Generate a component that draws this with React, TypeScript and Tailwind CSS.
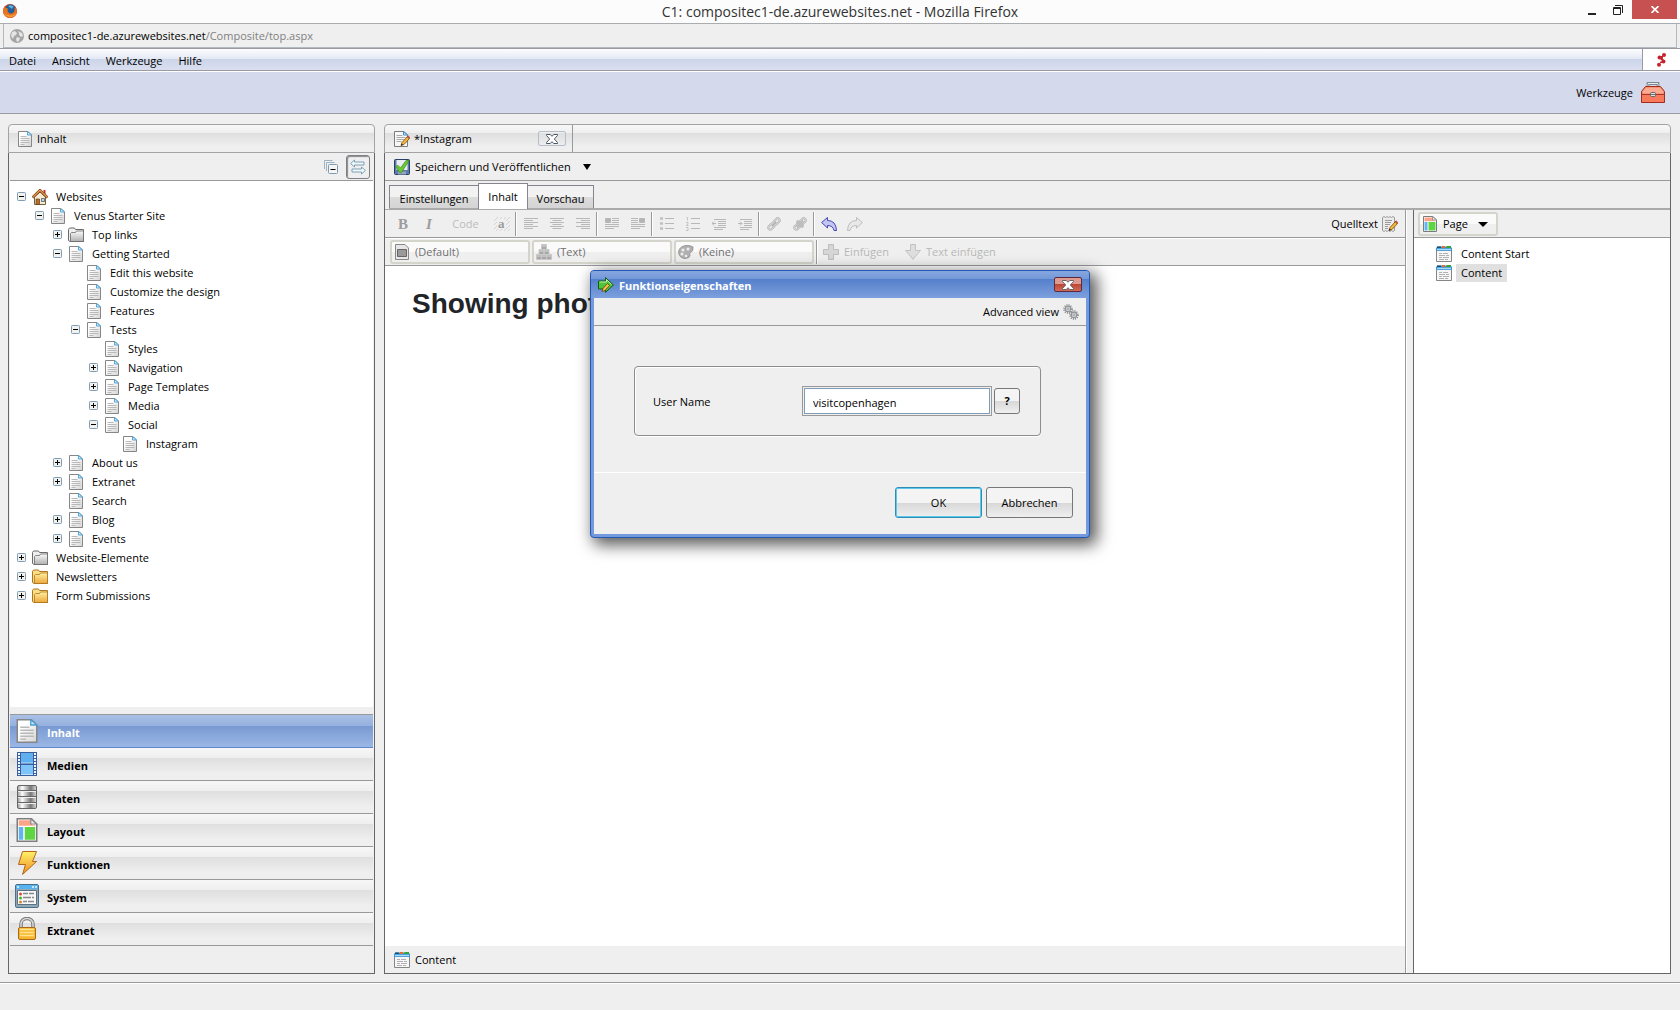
import type { ReactNode } from "react";

const bar =
  "bg-[linear-gradient(to_bottom,#f7f7f7_0%,#efefef_30%,#dfdfdf_31%,#efefef_80%)]";

function PageIcon({ size = 16 }: { size?: number }) {
  return (
    <svg width={size} height={size} viewBox="0 0 16 16" className="shrink-0">
      <defs>
        <linearGradient id="pg" x1="0" y1="0" x2="1" y2="1">
          <stop offset="0.3" stopColor="#fff" />
          <stop offset="1" stopColor="#d4d4d4" />
        </linearGradient>
      </defs>
      <path d="M1.500 .5h9.500l3.500 3.500v11.500h-13z" fill="url(#pg)" stroke="#868686" />
      <path d="M3.500 5.500h6M3.500 7.500h9M3.500 9.500h9M3.500 11.500h9M3.500 13.500h4" stroke="#b9b9b9" />
      <path d="M10.500 .5v3.500h4z" fill="#cdeafa" stroke="#4a9fd0" strokeWidth="0.9" />
    </svg>
  );
}

function Pencil() {
  return (
    <>
      <path d="M7 14.500l1-3 5.500-6 2 2-5.500 6z" fill="#f3b73c" stroke="#7a4a10" strokeWidth="0.8" />
      <path d="M13.200 5.800l1-1 1.600 1.600-1 1.200z" fill="#d9483b" stroke="#8c2a22" strokeWidth="0.5" />
      <path d="M6.800 14.700l.9-2.200 1.300 1.300z" fill="#222" />
    </>
  );
}

function EditPageIcon() {
  return (
    <svg width="16" height="16" viewBox="0 0 16 16" className="shrink-0">
      <path d="M.5 .5h9.500l3.500 3.500v11.500h-13z" fill="#f7f7f7" stroke="#7c7c7c" />
      <path d="M2.500 4.500h6M2.500 6.500h9M2.500 8.500h8M2.500 10.500h5" stroke="#a9a9a9" />
      <path d="M9.500 .5v3.500h4z" fill="#bfe4f8" stroke="#3d8fc4" />
      <Pencil />
    </svg>
  );
}

function SourceIcon() {
  return (
    <svg width="16" height="16" viewBox="0 0 16 16">
      <path
        d="M.5 1.500l1.500-1 1.500 1 1.500-1 1.500 1 1.500-1 1.500 1 1.500-1 1.500 1v13l-1.500 1-1.500-1-1.500 1-1.500-1-1.500 1-1.500-1-1.500 1-1.500-1z"
        fill="#ececec"
        stroke="#999"
      />
      <path d="M3 4.500h7M3 6.500h6M3 8.500h5M3 10.500h3M3 12.500h3" stroke="#9a9a9a" />
      <Pencil />
    </svg>
  );
}

function FolderIcon({ gold = false }: { gold?: boolean }) {
  const line = gold ? "#b07420" : "#6a6a6a";
  return (
    <svg width="16" height="16" viewBox="0 0 16 16" className="shrink-0">
      <defs>
        <linearGradient id={gold ? "fg" : "fs"} x1="0" y1="0" x2="0" y2="1">
          <stop offset="0" stopColor={gold ? "#fdf0a0" : "#fafafa"} />
          <stop offset="1" stopColor={gold ? "#eda83c" : "#b0b0b0"} />
        </linearGradient>
      </defs>
      <path d="M.5 13.500v-11l1-1.500h5l1 1.500h8v12h-13.500z" fill={gold ? "#f9df86" : "#efefef"} stroke={line} />
      <path d="M2.500 14.500v-8l1-1h4l1-1.500h7v10.500z" fill={gold ? "url(#fg)" : "url(#fs)"} stroke={line} strokeWidth="0.8" />
    </svg>
  );
}

function HomeIcon() {
  return (
    <svg width="16" height="16" viewBox="0 0 16 16" className="shrink-0">
      <path d="M11.500 1h2v4h-2z" fill="#c8372d" />
      <path d="M2.500 8L8 3l5.500 5v7.500h-11z" fill="#f4ead6" stroke="#77603f" />
      <path d="M.5 8.500L8 1.200l7.500 7.300" fill="none" stroke="#7b3d17" strokeWidth="2.600" />
      <path d="M.8 8.200L8 1.200l7.200 7" fill="none" stroke="#e59a52" strokeWidth="1.200" />
      <path d="M4 10h3.500v5.500H4z" fill="#b5702e" stroke="#6b3d12" strokeWidth="0.7" />
      <path d="M9.500 9.500h3v3h-3z" fill="#bcdcf2" stroke="#555" strokeWidth="0.8" />
    </svg>
  );
}

function ContentIcon() {
  return (
    <svg width="16" height="16" viewBox="0 0 16 16" className="shrink-0">
      <path d="M.5 3.500h15v12H.5z" fill="#f6f6f6" stroke="#868686" />
      <path d="M0 2l1.500-1.500h13L16 2v3H0z" fill="#3e94d2" />
      <path d="M1 .5h4v1.500H1z" fill="#1f4a6b" />
      <path d="M6 0h3v2H6z" fill="#e66a2c" />
      <path d="M10.500 0h4.500v2h-4.500z" fill="#35a53a" />
      <path d="M1 3.500h14" stroke="#a9dafa" strokeWidth="1.400" />
      <path d="M3 7.500h3m1 0h5M3 9.500h6m1 0h3M3 11.500h3m1 0h6M3 13.500h5m1 0h3" stroke="#b0b0b0" />
    </svg>
  );
}

function LayoutIcon({ size = 16 }: { size?: number }) {
  return (
    <svg width={size} height={size} viewBox="0 0 16 16" className="shrink-0">
      <path d="M1.500 .5h9.500l3.500 3.500v11.500h-13z" fill="#fff" stroke="#7c7c7c" />
      <path d="M2.500 1.500h8l1 3h2v.7h-11z" fill="#fba48a" />
      <path d="M2.500 6h3v8.500h-3z" fill="#62b3ee" />
      <path d="M6.500 6h7v8.500h-7z" fill="#5fd544" />
      <path d="M10.500 .5v3.500h4z" fill="#eee" stroke="#888" strokeWidth="0.8" />
    </svg>
  );
}

function FilmIcon() {
  return (
    <svg width="24" height="24" viewBox="0 0 24 24">
      <path d="M2 0h20v24H2z" fill="#3a5f9e" />
      <path d="M6 1h12v10H6z" fill="#5fb0ef" />
      <path d="M6 13h12v9H6z" fill="#7cc4fa" />
      <path d="M6 11h12M6 22.500h12" stroke="#b9e0fc" />
      <path d="M4 1v22M20 1v22" stroke="#f2f6fc" strokeWidth="2" strokeDasharray="2 1" />
    </svg>
  );
}

function DataIcon() {
  return (
    <svg width="24" height="24" viewBox="0 0 24 24">
      <defs>
        <linearGradient id="db" x1="0" y1="0" x2="1" y2="0">
          <stop offset="0" stopColor="#999" />
          <stop offset="0.25" stopColor="#fff" />
          <stop offset="0.7" stopColor="#777" />
          <stop offset="1" stopColor="#ddd" />
        </linearGradient>
      </defs>
      <rect x="2.500" y=".5" width="19" height="23" rx="1.500" fill="url(#db)" stroke="#666" />
      <path d="M3 5.500h18M3 11.500h18M3 17.500h18" stroke="#666" />
      <path d="M3 6.500h18M3 12.500h18M3 18.500h18" stroke="#eee" />
    </svg>
  );
}

function BoltIcon() {
  return (
    <svg width="24" height="24" viewBox="0 0 24 24">
      <defs>
        <linearGradient id="bo" x1="0" y1="0" x2="0" y2="1">
          <stop offset="0" stopColor="#fff36b" />
          <stop offset="1" stopColor="#f08a1d" />
        </linearGradient>
      </defs>
      <path d="M7.500 .5h14l-4 10h4l-14 13 3-10H3.500z" fill="url(#bo)" stroke="#b5661c" />
    </svg>
  );
}

function SystemIcon() {
  return (
    <svg width="24" height="24" viewBox="0 0 24 24">
      <rect x=".5" y=".5" width="23" height="23" rx="1.500" fill="#90a9b8" stroke="#4c6f87" />
      <path d="M1 1h22v4H1z" fill="#55b4ef" />
      <path d="M17 2h2v2h-2zM20 2h2v2h-2zM2 2h2v2H2z" fill="#c2e6fb" />
      <path d="M2.500 6.500h19v14h-19z" fill="#f8f8f8" stroke="#5d7382" />
      <circle cx="5.500" cy="10" r="1.500" fill="#d84a3a" />
      <circle cx="5.500" cy="14" r="1.500" fill="#48b33c" />
      <circle cx="5.500" cy="18" r="1.500" fill="#d8892c" />
      <path d="M8 9.500h5m1 0h5M8 13.500h8m1 0h2M8 17.500h4m1 0h6" stroke="#888" strokeWidth="1.400" />
    </svg>
  );
}

function LockIcon() {
  return (
    <svg width="24" height="24" viewBox="0 0 24 24">
      <path d="M6 12V7a6 5.500 0 0 1 12 0v5" fill="none" stroke="#777" strokeWidth="3.500" />
      <path d="M6 12V7a6 5.500 0 0 1 12 0v5" fill="none" stroke="#d9d9d9" strokeWidth="1.500" />
      <rect x="3.500" y="10.500" width="17" height="12" rx="1.500" fill="#f7b530" stroke="#a8681a" />
      <path d="M5 12.500h14M5 15.500h14M5 18.500h14" stroke="#fde58e" strokeWidth="1.400" />
    </svg>
  );
}

function FirefoxIcon() {
  return (
    <svg width="14" height="14" viewBox="0 0 14 14">
      <circle cx="7" cy="7" r="7" fill="#c9401c" />
      <circle cx="7.500" cy="5.500" r="5" fill="#1f5f9c" />
      <path d="M5 2q3-2 6 1-2 0-2 2z" fill="#5db4dd" />
      <path d="M0 7q0-3 2-5 0 2 3 2.500-1 1.500 0 3.500 3 3 6 0 1-2 .500-4.500Q14 5 14 7.500 13 14 7 14 1 13.500 0 7z" fill="#e8701f" />
      <path d="M1 9q2 4 7 4 4-.500 5-4-3 3-6 2.500Q3 11 1 9z" fill="#f3a23c" />
    </svg>
  );
}

function GlobeIcon() {
  return (
    <svg width="14" height="14" viewBox="0 0 14 14">
      <circle cx="7" cy="7" r="7" fill="#a5a5a5" />
      <path d="M2 3l3-1 2 2-1 2-2 1-1 3-2-3zM8 2l4 2 1 3-2 1-2-2 0-2zM7 8l3 1-1 3-2 1-1-3z" fill="#e4e4e4" />
    </svg>
  );
}

function ToolboxIcon() {
  return (
    <svg width="24" height="21" viewBox="0 0 24 21">
      <path d="M7 5V1.500h10V5" fill="none" stroke="#5e6d6d" strokeWidth="2.500" />
      <path d="M7 5V1.500h10V5" fill="none" stroke="#e6eeee" />
      <path d="M.5 9.500l4-5h15l4 5v11H.5z" fill="#f9795c" stroke="#a02d1d" />
      <path d="M1.500 9.500l3.500-4h14l3.500 4v2h-21z" fill="#fbab92" />
      <path d="M1 12.500h22" stroke="#a93725" />
      <rect x="9.500" y="10.500" width="5" height="4" rx="1" fill="#ddd" stroke="#666" />
      <path d="M10 12.500h4" stroke="#777" />
    </svg>
  );
}

function SaveIcon() {
  return (
    <svg width="16" height="16" viewBox="0 0 16 16">
      <rect x=".5" y=".5" width="15" height="15" rx="1" fill="#5d7ba8" stroke="#2a3f66" />
      <path d="M2.500 1h11v10h-11z" fill="#e9edf3" />
      <path d="M4 12.500h8v3H4z" fill="#97a6bf" />
      <path d="M2 7.500l1.500-1.500L6.500 9 12 1.500h3L7.500 13.500h-2z" fill="#6cc832" stroke="#3a8f20" strokeWidth="0.7" />
    </svg>
  );
}

function FunctionIcon() {
  return (
    <svg width="16" height="16" viewBox="0 0 16 16">
      <path d="M.5 4h7V.6L15.400 8l-7.900 7.400V12h-7z" fill="#4fc43a" stroke="#115c10" />
      <path d="M1.500 5h7V2.500l5 5" fill="none" stroke="#b9f1a4" />
      <path d="M4 14.500l1-3 4.500-5 2 2-4.500 5z" fill="#f6c04a" stroke="#6d3d0e" strokeWidth="0.8" />
    </svg>
  );
}

function GearsIcon() {
  return (
    <svg width="16" height="16" viewBox="0 0 16 16" fill="none">
      <circle cx="5" cy="5" r="4" stroke="#777" strokeWidth="1.500" strokeDasharray="1 1.100" />
      <circle cx="5" cy="5" r="2.800" fill="#d3d7db" stroke="#858a90" />
      <circle cx="5" cy="5" r="1" fill="#f0f0f0" stroke="#666" strokeWidth="0.5" />
      <circle cx="11" cy="11" r="4" stroke="#777" strokeWidth="1.500" strokeDasharray="1 1.100" />
      <circle cx="11" cy="11" r="2.800" fill="#d3d7db" stroke="#858a90" />
      <circle cx="11" cy="11" r="1" fill="#f0f0f0" stroke="#666" strokeWidth="0.5" />
    </svg>
  );
}

function CloseGlyph({ line }: { line: string }) {
  return (
    <svg width="12" height="10" viewBox="0 0 12 10">
      <path
        d="M.5 .5h3.800L6 2.300 7.700 .5h3.800v1L8.300 5l3.200 3.500v1H7.700L6 7.700 4.300 9.500H.5v-1L3.700 5 .5 1.500z"
        fill="#fff"
        stroke={line}
      />
    </svg>
  );
}

function Lines({ d, children }: { d: string; children?: ReactNode }) {
  return (
    <svg width="14" height="14" viewBox="0 0 14 14" stroke="#b8b8b8" fill="none">
      <path d={d} />
      {children}
    </svg>
  );
}

const align = {
  left: "M0 1.500h14M0 3.500h9M0 5.500h14M0 7.500h9M0 9.500h14M0 11.500h9",
  center: "M0 1.500h14M2.500 3.500h9M0 5.500h14M2.500 7.500h9M0 9.500h14M2.500 11.500h9",
  right: "M0 1.500h14M5 3.500h9M0 5.500h14M5 7.500h9M0 9.500h14M5 11.500h9",
};

const chain = (
  <g transform="rotate(-45 8 8)" fill="none">
    <rect x="-1" y="5.500" width="9" height="5" rx="2.500" stroke="#b5b5b5" strokeWidth="2.600" />
    <rect x="8" y="5.500" width="9" height="5" rx="2.500" stroke="#b5b5b5" strokeWidth="2.600" />
    <rect x="-1" y="5.500" width="9" height="5" rx="2.500" stroke="#e0e0e0" />
    <rect x="8" y="5.500" width="9" height="5" rx="2.500" stroke="#e0e0e0" />
    <path d="M4 8h8" stroke="#b0b0b0" strokeWidth="2" />
  </g>
);

function Tool({ label, children }: { label: string; children: ReactNode }) {
  return (
    <button aria-label={label} className="flex h-6 w-[26px] items-center justify-center text-[#9d9d9d]">
      {children}
    </button>
  );
}

function Sep() {
  return <span className="mr-px h-6 w-[2px] border-l border-r border-l-[#999] border-r-white" />;
}

function EditorTools() {
  return (
    <div className="flex h-7 items-center border-b border-[#999] pl-[5px]">
      <Tool label="Fett">
        <span className="font-['Liberation_Serif',serif] text-[15px] font-bold">B</span>
      </Tool>
      <Tool label="Kursiv">
        <span className="font-['Liberation_Serif',serif] text-[15px] font-bold italic">I</span>
      </Tool>
      <button className="h-6 w-[47px] text-[#bcbcbc]">Code</button>
      <Tool label="Zeichen">
        <svg width="16" height="14" viewBox="0 0 16 14">
          <path d="M0 4l4-4M0 8l8-8M0 12l12-12M2 14l14-14M6 14l10-10M10 14l6-6M14 14l2-2" stroke="#d4d4d4" />
          <path d="M3 2h9v10H3z" fill="#efefef" />
          <text x="4" y="11" fontSize="13" fontWeight="bold" fontFamily="Liberation Serif" fill="#9a9a9a">
            a
          </text>
        </svg>
      </Tool>
      <Sep />
      <Tool label="Linksbündig"><Lines d={align.left} /></Tool>
      <Tool label="Zentriert"><Lines d={align.center} /></Tool>
      <Tool label="Rechtsbündig"><Lines d={align.right} /></Tool>
      <Sep />
      <Tool label="Bild links">
        <Lines d="M7 1.500h7M7 3.500h7M7 5.500h7M0 7.500h14M0 9.500h14M0 11.500h9">
          <path d="M.5 1.500h5v4h-5z" fill="#b4b4b4" />
        </Lines>
      </Tool>
      <Tool label="Bild rechts">
        <Lines d="M0 1.500h7M0 3.500h7M0 5.500h7M0 7.500h14M0 9.500h14M0 11.500h9">
          <path d="M8.500 1.500h5v4h-5z" fill="#b4b4b4" />
        </Lines>
      </Tool>
      <Sep />
      <Tool label="Aufzählung">
        <Lines d="M5 1.500h9M5 6.500h9M5 11.500h9">
          <path d="M0 1.500h3M0 6.500h3M0 11.500h3" strokeWidth="2.600" stroke="#c0c0c0" />
        </Lines>
      </Tool>
      <Tool label="Nummerierung">
        <Lines d="M5 1.500h9M5 6.500h9M5 11.500h9">
          <path d="M.5 .5h1v3M0 5.500h2v1l-1.500 2h2M0 10.500h2v3h-2" strokeWidth="0.8" />
        </Lines>
      </Tool>
      <Tool label="Einzug verkleinern">
        <Lines d="M2 2.500h12M6 4.500h8M6 6.500h8M6 8.500h8M2 10.500h12M2 12.500h9">
          <path d="M0 6.500h4M2 4.500l-2 2 2 2" />
        </Lines>
      </Tool>
      <Tool label="Einzug vergrößern">
        <Lines d="M2 2.500h12M6 4.500h8M6 6.500h8M6 8.500h8M2 10.500h12M2 12.500h9">
          <path d="M0 6.500h4M2 4.500l2 2-2 2" />
        </Lines>
      </Tool>
      <Sep />
      <Tool label="Link"><svg width="16" height="16" viewBox="-2 -2 20 20">{chain}</svg></Tool>
      <Tool label="Link entfernen">
        <svg width="16" height="16" viewBox="-2 -2 20 20">
          {chain}
          <path d="M4 4l8 8M12 4l-8 8" stroke="#bdbdbd" strokeWidth="4" />
        </svg>
      </Tool>
      <Sep />
      <Tool label="Rückgängig">
        <svg width="16" height="16" viewBox="0 0 16 16">
          <path d="M.6 6.500L6.500 1.500v3q8.500 0 9 10h-2.500q-1-5-6.500-5v2.500z" fill="#c3c6f4" stroke="#4547b0" />
        </svg>
      </Tool>
      <Tool label="Wiederholen">
        <svg width="16" height="16" viewBox="0 0 16 16">
          <path d="M15.400 6.500L9.500 1.500v3q-8.500 0-9 10h2.500q1-5 6.500-5v2.500z" fill="#e8e8e8" stroke="#bdbdbd" />
        </svg>
      </Tool>
      <button className="ml-auto flex items-center gap-1 pr-[7px]">
        Quelltext <SourceIcon />
      </button>
    </div>
  );
}

function Drop({ label, value, icon }: { label: string; value: string; icon: ReactNode }) {
  return (
    <div className="relative">
      <select
        aria-label={label}
        className="h-6 w-[140px] appearance-none rounded-[3px] border-2 border-[#d4d4cc] bg-[linear-gradient(to_bottom,#fafafa_50%,#efefef_50%)] pl-[23px] text-[#707070]"
      >
        <option>{value}</option>
      </select>
      <span className="pointer-events-none absolute top-1 left-1">{icon}</span>
    </div>
  );
}

function FormatTools() {
  return (
    <div className="flex h-7 items-center gap-[2px] border-t border-b border-t-white border-b-[#999] pl-[5px]">
      <Drop
        label="Klasse"
        value="(Default)"
        icon={
          <svg width="16" height="16" viewBox="0 0 16 16">
            <path d="M1.500 .5h9.500l3.500 3.500v11.500h-13z" fill="#e6e6e6" stroke="#888" />
            <path d="M3.500 5.500h9v7h-9z" fill="#9a9a9a" stroke="#666" />
          </svg>
        }
      />
      <Drop
        label="Format"
        value="(Text)"
        icon={
          <svg width="16" height="16" viewBox="0 0 16 16">
            <path d="M5.500 .5h5v5h-5zM3 5.500h5v5H3zM8 5.500h5v5H8zM.5 10.500h5v5h-5zM5.500 10.500h5v5h-5zM10.500 10.500h5v5h-5z" fill="#a8a8a8" stroke="#c9c9c9" />
            <path d="M6 2h4M3.500 7h4M8.500 7h4M1 12h4M6 12h4M11 12h4" stroke="#d9d9d9" />
          </svg>
        }
      />
      <Drop
        label="Vorlage"
        value="(Keine)"
        icon={
          <svg width="16" height="16" viewBox="0 0 16 16">
            <path d="M15 3q-3-2-7-1.500Q1 2.500 .6 8q.4 6 6.400 6.500 5-.5 5-3-1-2 .5-3 3-1 2.500-5.500z" fill="#b0b0b0" stroke="#999" />
            <circle cx="5" cy="6" r="1.500" fill="#eee" />
            <circle cx="10" cy="5" r="1.500" fill="#eee" />
            <circle cx="4" cy="10" r="1.500" fill="#eee" />
            <circle cx="8" cy="12" r="1.300" fill="#eee" />
          </svg>
        }
      />
      <Sep />
      <button className="ml-0.5 flex items-center gap-[5px] text-[#b8b8b8]">
        <svg width="16" height="16" viewBox="0 0 16 16">
          <path d="M5.500 .5h5v5h5v5h-5v5h-5v-5h-5v-5h5z" fill="#d6d6d6" stroke="#bdbdbd" />
        </svg>
        Einfügen
      </button>
      <button className="ml-[14px] flex items-center gap-[5px] text-[#b8b8b8]">
        <svg width="16" height="16" viewBox="0 0 16 16">
          <path d="M5.500 .5h5v6h5L8 15.300.5 6.500h5z" fill="#dedede" stroke="#c2c2c2" />
        </svg>
        Text einfügen
      </button>
    </div>
  );
}

type Node = { level: number; text: string; open?: boolean; icon?: "home" | "folder" | "gold" };

const tree: Node[] = [
  { level: 0, text: "Websites", open: true, icon: "home" },
  { level: 1, text: "Venus Starter Site", open: true },
  { level: 2, text: "Top links", open: false, icon: "folder" },
  { level: 2, text: "Getting Started", open: true },
  { level: 3, text: "Edit this website" },
  { level: 3, text: "Customize the design" },
  { level: 3, text: "Features" },
  { level: 3, text: "Tests", open: true },
  { level: 4, text: "Styles" },
  { level: 4, text: "Navigation", open: false },
  { level: 4, text: "Page Templates", open: false },
  { level: 4, text: "Media", open: false },
  { level: 4, text: "Social", open: true },
  { level: 5, text: "Instagram" },
  { level: 2, text: "About us", open: false },
  { level: 2, text: "Extranet", open: false },
  { level: 2, text: "Search" },
  { level: 2, text: "Blog", open: false },
  { level: 2, text: "Events", open: false },
  { level: 0, text: "Website-Elemente", open: false, icon: "folder" },
  { level: 0, text: "Newsletters", open: false, icon: "gold" },
  { level: 0, text: "Form Submissions", open: false, icon: "gold" },
];

const indent = ["pl-[7px]", "pl-[25px]", "pl-[43px]", "pl-[61px]", "pl-[79px]", "pl-[97px]"];

function Toggle({ open }: { open: boolean }) {
  return (
    <button aria-label={open ? "Zuklappen" : "Aufklappen"}>
      <svg width="9" height="9" viewBox="0 0 9 9">
        <rect x=".5" y=".5" width="8" height="8" rx="0.800" fill="#f3f1ec" stroke="#7f9db9" />
        <path d={open ? "M2 4.500h5" : "M2 4.500h5M4.500 2v5"} stroke="#000" />
      </svg>
    </button>
  );
}

function Tree() {
  return (
    <ul className="flex-1 bg-white pt-[6px]">
      {tree.map((node) => (
        <li key={node.text} className={`flex h-[19px] items-center ${indent[node.level]}`}>
          <span className="mr-[6px] flex w-[9px]">
            {node.open !== undefined && <Toggle open={node.open} />}
          </span>
          {node.icon === "home" ? (
            <HomeIcon />
          ) : node.icon ? (
            <FolderIcon gold={node.icon === "gold"} />
          ) : (
            <PageIcon />
          )}
          <span className="ml-2">{node.text}</span>
        </li>
      ))}
    </ul>
  );
}

const sections = [
  { name: "Inhalt", icon: <PageIcon size={24} /> },
  { name: "Medien", icon: <FilmIcon /> },
  { name: "Daten", icon: <DataIcon /> },
  { name: "Layout", icon: <LayoutIcon size={24} /> },
  { name: "Funktionen", icon: <BoltIcon /> },
  { name: "System", icon: <SystemIcon /> },
  { name: "Extranet", icon: <LockIcon /> },
];

function Explorer() {
  return (
    <section className="flex w-[367px] shrink-0 flex-col">
      <header className={`flex h-[29px] items-center gap-1 rounded-t border border-[#a3a3a6] pl-2 ${bar}`}>
        <PageIcon />
        <h2>Inhalt</h2>
      </header>
      <div className="flex flex-1 flex-col border border-t-0 border-[#666] px-px">
        <div className="flex h-7 items-center justify-end gap-2 border-b border-[#999] pr-[3px]">
          <button aria-label="Alle zuklappen">
            <svg width="14" height="14" viewBox="0 0 14 14">
              <path d="M.5 9V.5h8M2.500 11V2.500h8" fill="none" stroke="#9db4c3" />
              <rect x="4.500" y="4.500" width="9" height="9" rx="1" fill="#f5f5f5" stroke="#7e9bb0" />
              <path d="M6.500 9.500h5" stroke="#000" />
            </svg>
          </button>
          <button
            aria-label="Synchronisieren"
            className="flex h-6 w-6 items-center justify-center rounded-[3px] border border-[#7d8187] shadow-[inset_1px_1px_1px_#888]"
          >
            <svg width="16" height="16" viewBox="0 0 16 16">
              <path d="M.6 4.500L4.500 1v2h9.500v3H4.500v2zM15.400 11.500L11.500 8v2H2v3h9.500v2z" fill="#f3f8fb" stroke="#7ba0b8" />
            </svg>
          </button>
        </div>
        <Tree />
        <nav className="mt-[7px] mb-[27px] border-t border-[#999]">
          {sections.map((section, index) => (
            <button
              key={section.name}
              className={`flex h-[33px] w-full items-center gap-2 border-b pl-[5px] text-left font-bold ${
                index === 0
                  ? "border-[#5f88cc] bg-[linear-gradient(to_bottom,#a9c0e6_0%,#96b1de_33%,#7899d2_34%,#9cb7e5_100%)] text-white"
                  : `border-[#999] ${bar}`
              }`}
            >
              {section.icon}
              <span className="pt-[3px]">{section.name}</span>
            </button>
          ))}
        </nav>
      </div>
    </section>
  );
}

function Structure() {
  return (
    <aside className="flex w-[257px] shrink-0 flex-col border-l border-[#666] bg-white">
      <div className="flex h-7 items-center border-b border-[#999] bg-[#efefef] pl-1">
        <div className="relative">
          <select
            aria-label="Platzhalter"
            className="h-6 w-20 appearance-none rounded-[3px] border-2 border-[#d4d4cc] bg-[linear-gradient(to_bottom,#fafafa_50%,#efefef_50%)] pl-[23px]"
          >
            <option>Page</option>
          </select>
          <span className="pointer-events-none absolute top-1 left-1">
            <LayoutIcon />
          </span>
          <svg width="10" height="5" className="pointer-events-none absolute top-[10px] right-[10px]">
            <path d="M0 0h10L5 5z" />
          </svg>
        </div>
      </div>
      <ul className="pt-[6px] pl-[22px]">
        <li className="flex h-[19px] items-center gap-1">
          <ContentIcon />
          <span className="px-[5px]">Content Start</span>
        </li>
        <li className="flex h-[19px] items-center gap-1">
          <ContentIcon />
          <span className="bg-[#e0e0e0] px-[5px] leading-[18px]">Content</span>
        </li>
      </ul>
    </aside>
  );
}

function Editor() {
  const tab =
    "flex h-[23px] items-center justify-center border border-b-0 border-[#85858f] pt-1 bg-[linear-gradient(to_bottom,#f2f2f2_50%,#dcdcdc_51%,#d4d4d4_100%)]";
  return (
    <section className="flex min-w-0 flex-1 flex-col">
      <header className={`flex h-[29px] rounded-t border border-[#a3a3a6] ${bar}`}>
        <div className="flex w-[188px] items-center gap-1 border-r border-[#999] pr-[6px] pl-[9px]">
          <EditPageIcon />
          <h2 className="flex-1">*Instagram</h2>
          <button
            aria-label="Tab schließen"
            className="flex h-[15px] w-7 items-center justify-center rounded-[2px] border border-[#b4bfca]"
          >
            <CloseGlyph line="#4b5666" />
          </button>
        </div>
      </header>
      <div className="flex flex-1 flex-col border border-t-0 border-[#666]">
        <div className="flex h-7 items-center border-b border-[#999] pl-[9px]">
          <button className="flex items-center gap-[5px]">
            <SaveIcon />
            Speichern und Veröffentlichen
            <svg width="8" height="6" className="ml-[7px]">
              <path d="M0 0h8L4 6z" />
            </svg>
          </button>
        </div>
        <div className="flex h-[29px] items-end border-b border-[#aaa] pl-1">
          <div className="flex h-full flex-1 items-end border-b border-[#aaa]">
            <button className={`${tab} w-[90px]`}>Einstellungen</button>
            <button className="z-10 -mr-px -mb-px -ml-px flex h-[26px] w-[50px] items-center justify-center border border-b-0 border-[#85858f] bg-white">
              Inhalt
            </button>
            <button className={`${tab} w-[67px]`}>Vorschau</button>
          </div>
        </div>
        <div className="flex flex-1">
          <div className="flex min-w-0 flex-1 flex-col border-r border-[#999]">
            <EditorTools />
            <FormatTools />
            <article className="flex-1 bg-white px-[27px] pt-[22px]">
              <h1 className="font-['Liberation_Sans',Arial,sans-serif] text-[28px] leading-8 font-bold text-[#212529]">
                Showing photos
              </h1>
            </article>
            <footer className="flex h-[27px] items-center gap-[5px] pl-[9px]">
              <ContentIcon />
              Content
            </footer>
          </div>
          <div className="w-[7px] shrink-0 border-l border-white" />
          <Structure />
        </div>
      </div>
    </section>
  );
}

function Dialog() {
  const button =
    "h-[31px] w-[87px] rounded-[3px] border pt-px bg-[linear-gradient(to_bottom,#f4f4f4_50%,#d8d8d8_51%,#efefef_100%)]";
  return (
    <div
      role="dialog"
      aria-labelledby="dialog-title"
      className="absolute top-[270px] left-1/2 z-20 w-[500px] -translate-x-1/2 rounded-[4px] border border-[#2456b4] bg-[#749ade] px-[3px] pb-[3px] shadow-[5px_5px_16px_2px_rgba(0,0,0,0.65)]"
    >
      <div className="-mx-[3px] flex h-[27px] items-center gap-[5px] rounded-t-[3px] bg-[linear-gradient(to_bottom,#86a6df_0%,#7398d9_30%,#5580cb_31%,#7da0dd_100%)] px-[7px]">
        <FunctionIcon />
        <h2 id="dialog-title" className="flex-1 pt-0.5 font-bold text-white">
          Funktionseigenschaften
        </h2>
        <button
          aria-label="Schließen"
          className="flex h-[15px] w-7 items-center justify-center rounded-[2px] border border-[#5b2a3c] bg-[linear-gradient(to_bottom,#dc9a90_45%,#bb4630_46%,#d2695a_100%)]"
        >
          <CloseGlyph line="#666" />
        </button>
      </div>
      <div className="bg-[#efefef]">
        <div className="flex h-7 items-center justify-end border-b border-[#999] pr-[7px]">
          <button className="flex items-center gap-1">
            Advanced view <GearsIcon />
          </button>
        </div>
        <div className="px-10 pt-10 pb-9">
          <div className="mr-[5px] flex h-[70px] items-center rounded-[4px] border border-[#8d8d8d] pr-5 pl-[18px] shadow-[inset_1px_1px_0_#fff,0_1px_0_#fff]">
            <label htmlFor="user-name" className="flex-1 pt-0.5">
              User Name
            </label>
            <div className="border border-[#999] bg-[#efefef] p-px">
              <input
                id="user-name"
                defaultValue="visitcopenhagen"
                className="h-[26px] w-[186px] border border-[#7f9db9] bg-white px-2 pt-0.5 outline-none"
              />
            </div>
            <button
              aria-label="Hilfe"
              className="ml-0.5 h-[26px] w-[26px] rounded-[3px] border border-[#777] bg-[linear-gradient(to_bottom,#f4f4f4_50%,#d8d8d8_51%,#efefef_100%)] font-bold"
            >
              ?
            </button>
          </div>
        </div>
        <div className="flex justify-end gap-1 border-t border-white pt-[14px] pr-[13px] pb-4">
          <button className={`${button} border-[#2f8db5] shadow-[inset_0_0_0_1px_#5cc9ec]`}>OK</button>
          <button className={`${button} border-[#777]`}>Abbrechen</button>
        </div>
      </div>
    </div>
  );
}

function BrowserChrome() {
  return (
    <>
      <div className="flex h-6 border-b border-[#a9adb0] bg-[#fcfcfc]">
        <div className="flex flex-1 items-start pt-1 pl-[3px]">
          <FirefoxIcon />
        </div>
        <h1 className="text-[14px] leading-6 text-[#333]">
          C1: compositec1-de.azurewebsites.net - Mozilla Firefox
        </h1>
        <div className="flex flex-1 items-start justify-end pr-[3px]">
          <button aria-label="Minimieren" className="flex h-[19px] w-[26px] items-center justify-center">
            <svg width="8" height="12">
              <path d="M0 9h8v2H0z" fill="#222" />
            </svg>
          </button>
          <button aria-label="Verkleinern" className="flex h-[19px] w-[26px] items-center justify-center">
            <svg width="10" height="10" fill="none" stroke="#222">
              <path d="M.5 2.500h7v7h-7zM.5 3.500h7M2 .5h7.500V8" />
            </svg>
          </button>
          <button
            aria-label="Fenster schließen"
            className="ml-px flex h-[19px] w-[45px] items-center justify-center bg-[#c75050]"
          >
            <svg width="8" height="7" stroke="#fff" strokeWidth="1.600">
              <path d="M.5 0l7 7M7.500 0l-7 7" />
            </svg>
          </button>
        </div>
      </div>
      <div className="mx-[3px] flex h-6 items-center gap-1 border border-t-0 border-[#b4bac0] pl-[6px]">
        <GlobeIcon />
        <p className="pt-px">
          compositec1-de.azurewebsites.net
          <span className="text-[#808080]">/Composite/top.aspx</span>
        </p>
      </div>
    </>
  );
}

export default function App() {
  return (
    <div className="relative flex min-h-screen flex-col bg-[#efefef] font-['Open_Sans','Noto_Sans',sans-serif] text-[11px] leading-4 text-black">
      <BrowserChrome />
      <div className="flex h-[23px] border-t border-b border-[#9a9aa2] bg-[linear-gradient(to_bottom,#fdfdff_0%,#e2e8f4_48%,#ccd5e9_49%,#dadff0_100%)]">
        <nav className="flex flex-1 items-center gap-4 pt-0.5 pl-[9px]">
          <button>Datei</button>
          <button>Ansicht</button>
          <button>Werkzeuge</button>
          <button>Hilfe</button>
        </nav>
        <div className="flex w-[38px] items-center justify-center border-l border-[#9a9aa2] bg-white">
          <svg width="9" height="14" viewBox="0 0 9 14" fill="#c4242e">
            <circle cx="7" cy="2" r="2" />
            <circle cx="2.500" cy="4.500" r="2" />
            <circle cx="6.500" cy="8.500" r="2" />
            <circle cx="2" cy="11.800" r="2" />
            <path d="M3 3h3v2.500H3zM2.500 5.500h3l2 2h-3zM3 8.500h3v1.500H3z" />
          </svg>
        </div>
      </div>
      <div className="flex h-[43px] items-center justify-end border-t border-b border-t-white border-b-[#9a9aa2] bg-[#d4daec] pr-[15px]">
        <button className="flex items-center gap-2">
          Werkzeuge <ToolboxIcon />
        </button>
      </div>
      <main className="flex flex-1 gap-[9px] px-2 pt-[10px] pr-[9px] pb-2">
        <Explorer />
        <Editor />
      </main>
      <footer className="h-7 border-t border-[#999] shadow-[inset_0_1px_0_#fff]" />
      <Dialog />
    </div>
  );
}
